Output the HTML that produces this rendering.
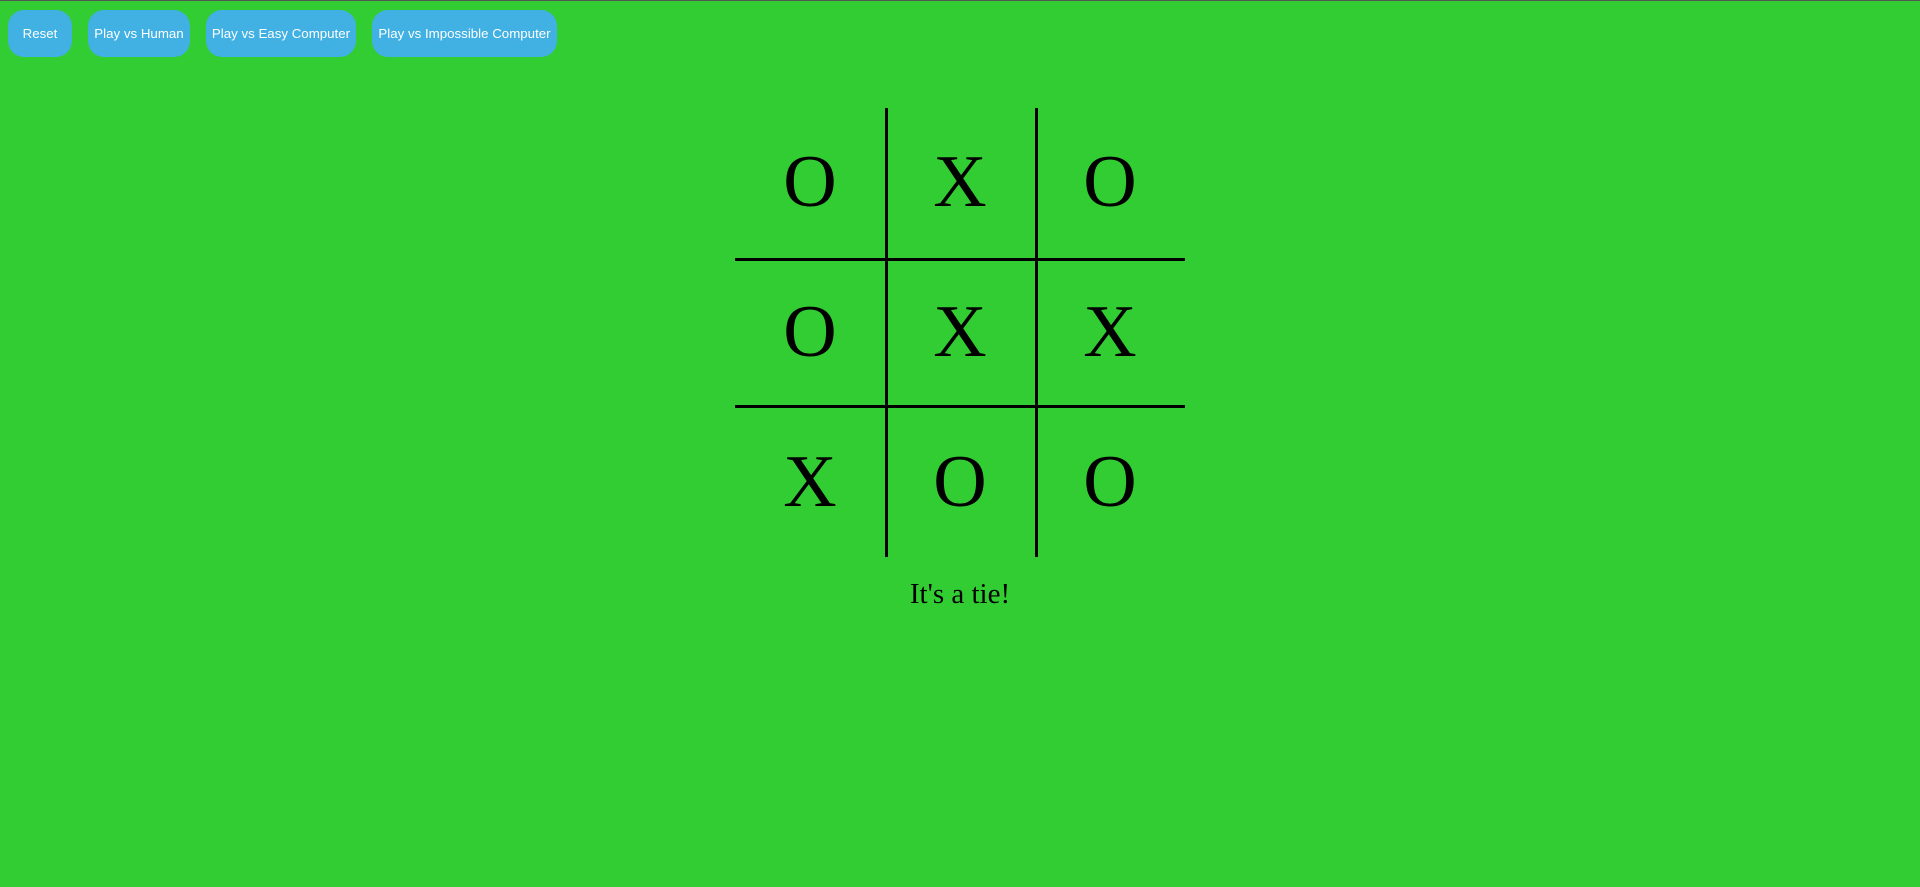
<!DOCTYPE html>
<html><head><style>
html,body{margin:0;padding:0;width:1920px;height:887px;background:#32cd32;overflow:hidden;}
body{border-top:1px solid #555;box-sizing:border-box;position:relative;font-family:"Liberation Serif",serif;}
.btn{position:absolute;top:9px;height:47px;background:#41b0e2;color:#fff;border-radius:16px;font:13.3px "Liberation Sans",sans-serif;display:flex;align-items:center;justify-content:center;white-space:nowrap;}
.l{position:absolute;background:#000;}
.c{position:absolute;width:150px;display:flex;align-items:center;justify-content:center;font-size:74px;line-height:1;}
.msg{position:absolute;left:0;width:1920px;top:577px;text-align:center;font-size:29px;}
</style></head><body>
<div class="btn" style="left:8px;width:64px">Reset</div>
<div class="btn" style="left:88px;width:102px">Play vs Human</div>
<div class="btn" style="left:206px;width:150px">Play vs Easy Computer</div>
<div class="btn" style="left:372px;width:185px">Play vs Impossible Computer</div>

<div class="l" style="left:885px;top:107px;width:3px;height:449px"></div>
<div class="l" style="left:1035px;top:107px;width:3px;height:449px"></div>
<div class="l" style="left:735px;top:257px;width:450px;height:3px"></div>
<div class="l" style="left:735px;top:404px;width:450px;height:3px"></div>

<div class="c" style="left:735px;top:106px;height:150px">O</div>
<div class="c" style="left:885px;top:106px;height:150px">X</div>
<div class="c" style="left:1035px;top:106px;height:150px">O</div>
<div class="c" style="left:735px;top:259px;height:144px">O</div>
<div class="c" style="left:885px;top:259px;height:144px">X</div>
<div class="c" style="left:1035px;top:259px;height:144px">X</div>
<div class="c" style="left:735px;top:406px;height:149px">X</div>
<div class="c" style="left:885px;top:406px;height:149px">O</div>
<div class="c" style="left:1035px;top:406px;height:149px">O</div>

<div class="msg">It's a tie!</div>
</body></html>
